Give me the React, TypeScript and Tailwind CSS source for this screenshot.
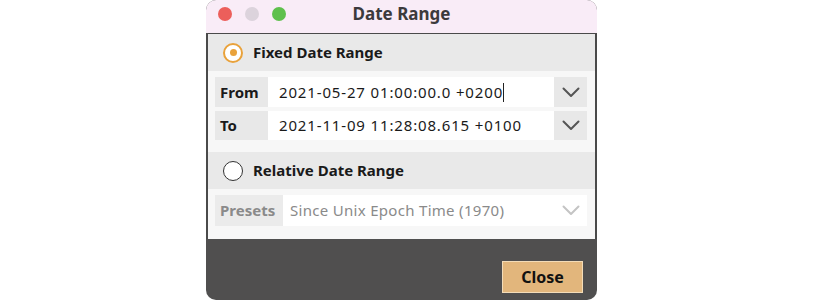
import React from "react";

const Chevron = ({ color }: { color: string }) => (
  <svg width="18" height="11" viewBox="0 0 18 11" fill="none">
    <path d="M1.5 1.5 L9 9 L16.5 1.5" stroke={color} strokeWidth="2" strokeLinecap="round" strokeLinejoin="round" />
  </svg>
);

export default function App() {
  const font = { fontFamily: '"Noto Sans", "Open Sans", sans-serif' };
  return (
    <div className="w-[822px] h-[300px] bg-white pl-[206px]" style={font}>
      <div className="w-[391px] h-[300px] rounded-[10px] overflow-hidden bg-[#504f4f] flex flex-col">
        {/* title bar */}
        <div className="h-[33px] bg-[#f9ecf7] relative flex items-center justify-center shrink-0">
          <div className="absolute left-[12px] top-[7px] flex gap-[13px]">
            <div className="w-[14px] h-[14px] rounded-full bg-[#ec5f5b]" />
            <div className="w-[14px] h-[14px] rounded-full bg-[#dcd3dc]" />
            <div className="w-[14px] h-[14px] rounded-full bg-[#5ec04c]" />
          </div>
          <span className="text-[17px] font-bold text-[#3c3a3c] leading-none -mt-[6px]">Date Range</span>
        </div>
        {/* panel */}
        <div className="h-[206px] bg-[#f7f7f7] border-t border-l-2 border-r-2 border-[#4a4a4a] flex flex-col shrink-0">
          <div className="h-[37px] bg-[#e9e9e9] flex items-center pl-[15px]">
            <div className="w-[20px] h-[20px] rounded-full border-2 border-[#e9a23b] bg-white flex items-center justify-center">
              <div className="w-[7px] h-[7px] rounded-full bg-[#e9a23b]" />
            </div>
            <span className="ml-[10px] text-[15px] font-bold text-[#1a1a1a]">Fixed Date Range</span>
          </div>
          <div className="mt-[6px] ml-[7px] w-[372px] flex h-[30px]">
            <div className="w-[53px] bg-[#e8e8e8] flex items-center pl-[5px] text-[15px] font-bold text-[#1a1a1a]">From</div>
            <div className="flex-1 bg-white flex items-center pl-[11px] text-[15px] tracking-[0.85px] text-[#1a1a1a]">
              2021-05-27 01:00:00.0 +0200
              <span className="inline-block w-px h-[19px] bg-[#222]" />
            </div>
            <div className="w-[33px] bg-[#e8e8e8] flex items-center justify-center">
              <Chevron color="#555" />
            </div>
          </div>
          <div className="mt-[4px] ml-[7px] w-[372px] flex h-[29px]">
            <div className="w-[53px] bg-[#e8e8e8] flex items-center pl-[5px] text-[15px] font-bold text-[#1a1a1a]">To</div>
            <div className="flex-1 bg-white flex items-center pl-[11px] text-[15px] tracking-[0.85px] text-[#1a1a1a]">
              2021-11-09 11:28:08.615 +0100
            </div>
            <div className="w-[33px] bg-[#e8e8e8] flex items-center justify-center">
              <Chevron color="#555" />
            </div>
          </div>
          <div className="mt-[12px] h-[37px] bg-[#e9e9e9] flex items-center pl-[15px]">
            <div className="w-[20px] h-[20px] rounded-full border-[1.5px] border-[#333] bg-white" />
            <span className="ml-[10px] text-[15px] font-bold text-[#1a1a1a]">Relative Date Range</span>
          </div>
          <div className="mt-[6px] ml-[7px] w-[372px] flex h-[31px]">
            <div className="w-[68px] bg-[#ebebeb] flex items-center pl-[5px] text-[15px] font-bold text-[#8a8a8a]">Presets</div>
            <div className="flex-1 bg-white flex items-center pl-[7px] text-[15px] tracking-[0.3px] text-[#8a8a8a]">
              Since Unix Epoch Time (1970)
            </div>
            <div className="w-[33px] bg-white flex items-center justify-center">
              <Chevron color="#c4c4c4" />
            </div>
          </div>
        </div>
        {/* footer */}
        <div className="flex-1 flex justify-end items-start pt-[22px] pr-[14px]">
          <button className="w-[81px] h-[32px] bg-[#e2b67c] border border-[#f3dcb8] text-[16px] font-bold text-[#111] flex items-center justify-center">
            Close
          </button>
        </div>
      </div>
    </div>
  );
}
